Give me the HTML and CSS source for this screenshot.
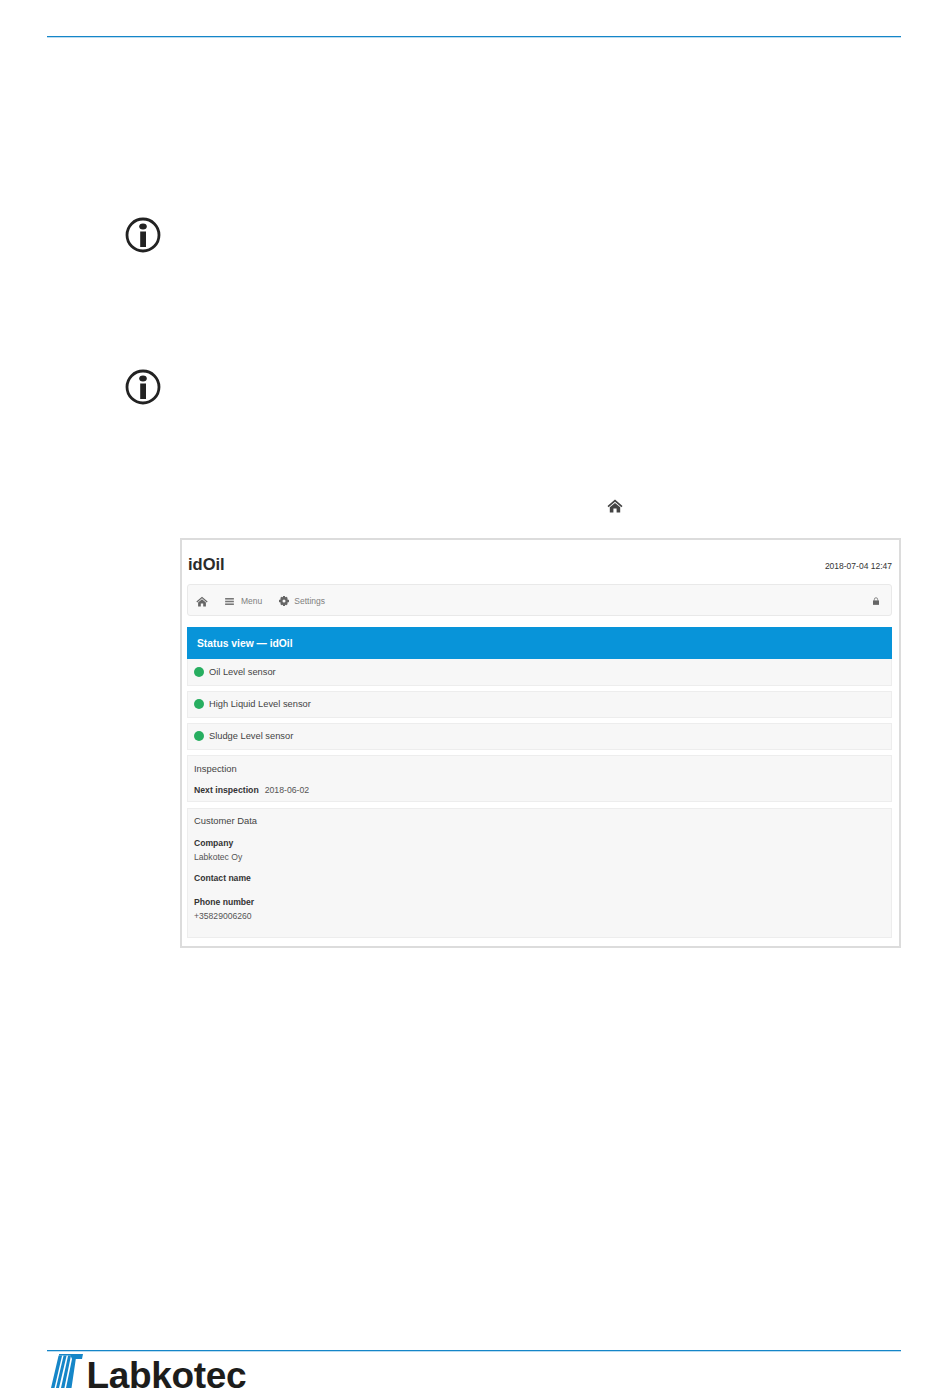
FILE: index.html
```html
<!DOCTYPE html>
<html lang="en">
<head>
  <meta charset="UTF-8">
  <title>idOil</title>
  <link rel="stylesheet" href="styles.css">
</head>
<body>
  <div class="page">
    <div class="rule"></div>

    <svg class="infoIcon first" viewBox="0 0 36 36">
      <circle cx="18" cy="18" r="16" fill="none" stroke="#222" stroke-width="2.8"/>
      <ellipse cx="18" cy="9.6" rx="3.8" ry="3" fill="#222"/>
      <rect x="15.2" y="14.5" width="5.8" height="15.5" fill="#222"/>
    </svg>
    <svg class="infoIcon second" viewBox="0 0 36 36">
      <circle cx="18" cy="18" r="16" fill="none" stroke="#222" stroke-width="2.8"/>
      <ellipse cx="18" cy="9.6" rx="3.8" ry="3" fill="#222"/>
      <rect x="15.2" y="14.5" width="5.8" height="15.5" fill="#222"/>
    </svg>

    <svg class="homeLine" viewBox="0 0 16 14">
      <path d="M8 0.5 L0.5 7 L1.6 8.2 L8 2.7 L14.4 8.2 L15.5 7 Z" fill="#444"/>
      <path d="M2.8 8.3 L8 3.9 L13.2 8.3 V13.5 H9.6 V9.6 H6.4 V13.5 H2.8 Z" fill="#444"/>
    </svg>

    <div class="shot">
      <div class="shotHead">
        <span class="brand">idOil</span>
        <span class="clock">2018-07-04 12:47</span>
      </div>

      <div class="navbar">
        <svg class="navHome" viewBox="0 0 16 14">
          <path d="M8 0.5 L0.5 7 L1.6 8.2 L8 2.7 L14.4 8.2 L15.5 7 Z" fill="#666"/>
          <path d="M2.8 8.3 L8 3.9 L13.2 8.3 V13.5 H9.6 V9.6 H6.4 V13.5 H2.8 Z" fill="#666"/>
        </svg>
        <span class="navItem">
          <svg class="navIcon" viewBox="0 0 10 8">
            <rect y="0" width="10" height="1.8" fill="#777"/>
            <rect y="3.1" width="10" height="1.8" fill="#777"/>
            <rect y="6.2" width="10" height="1.8" fill="#777"/>
          </svg>
          Menu
        </span>
        <span class="navItem">
          <svg class="navIcon gear" viewBox="0 0 10 10">
            <path d="M4.1 0 H5.9 L6.2 1.3 L7.4 0.8 L8.7 2 L8.2 3.2 L10 3.9 V6.1 L8.2 6.8 L8.7 8 L7.4 9.2 L6.2 8.7 L5.9 10 H4.1 L3.8 8.7 L2.6 9.2 L1.3 8 L1.8 6.8 L0 6.1 V3.9 L1.8 3.2 L1.3 2 L2.6 0.8 L3.8 1.3 Z M5 3.5 a1.5 1.5 0 1 0 0 3 a1.5 1.5 0 1 0 0 -3 Z" fill="#666" fill-rule="evenodd"/>
          </svg>
          Settings
        </span>
        <svg class="lock" viewBox="0 0 7 9">
          <path d="M1.6 4 V2.6 a1.9 1.9 0 0 1 3.8 0 V4" fill="none" stroke="#777" stroke-width="1"/>
          <rect y="3.8" width="7" height="5.2" fill="#666"/>
        </svg>
      </div>

      <div class="statusTitle">Status view — idOil</div>
      <div class="well sensor attached"><i class="dot"></i>Oil Level sensor</div>
      <div class="well sensor"><i class="dot"></i>High Liquid Level sensor</div>
      <div class="well sensor"><i class="dot"></i>Sludge Level sensor</div>

      <div class="well inspection">
        <div class="wellTitle">Inspection</div>
        <div class="inspectLine"><b>Next inspection</b><span>2018-06-02</span></div>
      </div>

      <div class="well customer">
        <div class="wellTitle">Customer Data</div>
        <b class="company">Company</b>
        <span class="value">Labkotec Oy</span>
        <b class="contact">Contact name</b>
        <b class="phone">Phone number</b>
        <span class="value">+35829006260</span>
      </div>
    </div>

    <div class="footer">
      <div class="rule"></div>
      <div class="logo">
        <svg class="logoMark" viewBox="0 0 32 34">
          <path d="M7.6 1.5 H11.1 L3.5 34 H0 Z M12.6 1.5 H15.6 L8 34 H5 Z M17.1 1.5 H20 L13.4 34 H10 Z" fill="#1586c8"/>
          <path d="M8 0 H32 L31 5 H24.8 L20.5 34 H15 L21 5 L19.5 1.5 H8 Z" fill="#1586c8"/>
        </svg>
        <span class="logoText">Labkotec</span>
      </div>
    </div>
  </div>
</body>
</html>
```

FILE: styles.css
```css
* {
  box-sizing: border-box;
}
html, body {
  margin: 0;
  padding: 0;
  background: #fff;
}
.page {
  position: relative;
  width: 950px;
  height: 1388px;
  padding: 36px 49px 0 47px;
  overflow: hidden;
  font-family: "Liberation Sans", Arial, sans-serif;
  color: #333;
}
.rule {
  height: 1px;
  background: #1586c8;
  box-shadow: 0 1px 0 #bcdcf0;
}

/* icons that stand alone on the page */
.infoIcon {
  position: absolute;
  left: 125px;
  width: 36px;
  height: 36px;
}
.infoIcon.first {
  top: 217px;
}
.infoIcon.second {
  top: 369px;
}
.homeLine {
  position: absolute;
  left: 607px;
  top: 499px;
  width: 16px;
  height: 14px;
}

/* the screenshot panel */
.shot {
  width: 721px;
  height: 410px;
  margin: 501px 0 0 133px;
  padding: 0 7px 0 5px;
  border: 2px solid #dcdcdc;
}
.shotHead {
  display: flex;
  justify-content: space-between;
  align-items: center;
  height: 44px;
  padding-top: 4px;
}
.brand {
  margin: 1px 0 0 1px;
  font-size: 16.5px;
  font-weight: bold;
  color: #2b2b2b;
}
.clock {
  font-size: 8.5px;
  margin-top: -1px;
  padding-top: 4px;
}
.navbar {
  display: flex;
  align-items: center;
  height: 32px;
  padding: 2px 12px 0 9px;
  background: #f8f8f8;
  border: 1px solid #e9e9e9;
  border-radius: 3px;
}
.navHome {
  width: 12px;
  height: 11px;
  margin-right: 17px;
  margin-left: -1px;
}
.navItem {
  display: flex;
  align-items: center;
  margin-right: 17px;
  font-size: 8.5px;
  color: #808080;
}
.navIcon {
  width: 9px;
  height: 7px;
  margin-right: 7px;
}
.navIcon.gear {
  width: 10px;
  height: 10px;
  margin-right: 5px;
}
.lock {
  width: 6px;
  height: 8px;
  margin-left: auto;
}
.statusTitle {
  height: 32px;
  margin-top: 11px;
  padding: 1px 10px 0;
  line-height: 32px;
  font-size: 10.3px;
  font-weight: bold;
  color: #fff;
  background: #0894d9;
}
.well {
  margin-bottom: 5px;
  padding: 0 6px;
  background: #f7f7f7;
  border: 1px solid #ededed;
  font-size: 9.3px;
}
.sensor {
  display: flex;
  align-items: center;
  height: 27px;
  padding-bottom: 1px;
  color: #444;
}
.sensor.attached {
  padding-bottom: 0;
  border-top: 0;
}
.dot {
  width: 10px;
  height: 10px;
  margin-right: 5px;
  border-radius: 50%;
  background: #27ae60;
}
.inspection {
  height: 47px;
  padding-top: 7px;
  margin-bottom: 6px;
}
.wellTitle {
  font-size: 9.4px;
  line-height: 12px;
  color: #444;
}
.inspectLine {
  margin-top: 10px;
  font-size: 8.7px;
  line-height: 10px;
}
.inspectLine span {
  margin-left: 6px;
  color: #555;
}
.customer {
  height: 130px;
  padding-top: 6px;
}
.customer b, .customer .value {
  display: block;
  font-size: 8.6px;
  line-height: 10px;
}
.customer .value {
  color: #555;
}
.company {
  margin-top: 11px;
  margin-bottom: 4px;
}
.contact {
  margin-top: 11px;
}
.phone {
  margin-top: 14px;
  margin-bottom: 4px;
}

/* footer with logo, cut by the page edge */
.footer {
  margin-top: 402px;
}
.logo {
  display: flex;
  align-items: flex-start;
  margin: 3px 0 0 4px;
}
.logoMark {
  width: 32px;
  height: 34px;
}
.logoText {
  margin: 3px 0 0 3.5px;
  font-size: 37px;
  line-height: 38px;
  font-weight: bold;
  letter-spacing: -0.35px;
  color: #1d1d1b;
}
```
